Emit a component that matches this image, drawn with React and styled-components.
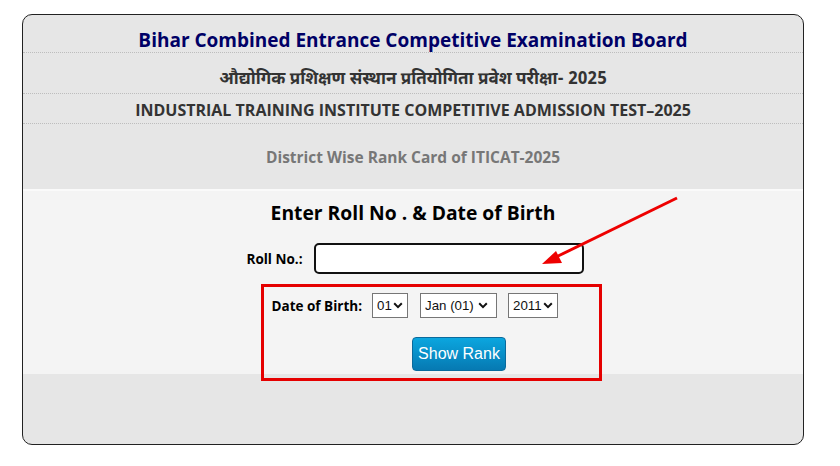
import React from "react";
import styled, { createGlobalStyle } from "styled-components";

const Global = createGlobalStyle`
  html, body { margin: 0; padding: 0; background: #fff; }
  body { font-family: "Open Sans", "Noto Sans", sans-serif; }
`;

const Page = styled.div`
  width: 840px;
  height: 466px;
  padding: 14px 0 0 22px;
  box-sizing: border-box;
  position: relative;
`;

const Card = styled.div`
  width: 782px;
  height: 431px;
  box-sizing: border-box;
  border: 1px solid #222;
  border-radius: 10px;
  background: #e6e6e6;
  overflow: hidden;
  display: flex;
  flex-direction: column;
`;

const HeadRow = styled.div`
  height: ${(p) => p.$h}px;
  flex-shrink: 0;
  box-sizing: border-box;
  display: flex;
  align-items: center;
  justify-content: center;
  border-bottom: ${(p) => (p.$line ? "1px dotted #bdbdbd" : "none")};
  font-weight: 700;
  font-size: ${(p) => p.$size}px;
  color: ${(p) => p.$color};
  padding-top: ${(p) => p.$pt || 0}px;
`;

const Hindi = styled.span`
  font-family: "Noto Sans Devanagari", "Noto Sans", "Open Sans", sans-serif;
`;

const FormArea = styled.div`
  background: #f4f4f4;
  border-top: 2px solid #fafafa;
  height: 185px;
  flex-shrink: 0;
  box-sizing: border-box;
  display: flex;
  flex-direction: column;
  align-items: center;
  padding-top: 10px;
`;

const FormTitle = styled.h2`
  margin: 0;
  font-size: 19.3px;
  font-weight: 700;
  color: #000;
  line-height: 24px;
`;

const RollRow = styled.div`
  display: flex;
  align-items: center;
  margin-top: 18px;
  margin-left: 4px;
  gap: 11px;
`;

const Label = styled.label`
  font-size: 13.5px;
  font-weight: 700;
  color: #000;
`;

const RollInput = styled.input`
  width: 270px;
  height: 31px;
  box-sizing: border-box;
  border: 2px solid #111;
  border-radius: 5px;
  background: #fff;
  outline: none;
`;

const Highlight = styled.div`
  width: 341px;
  height: 97px;
  flex-shrink: 0;
  box-sizing: border-box;
  border: 3px solid #e50000;
  margin-top: 10px;
  margin-left: 36px;
  display: flex;
  flex-direction: column;
  align-items: center;
  position: relative;
  z-index: 1;
`;

const DobRow = styled.div`
  display: flex;
  align-items: center;
  align-self: flex-start;
  margin: 6px 0 0 8px;
`;

const chevron =
  "url(\"data:image/svg+xml,%3Csvg xmlns='http://www.w3.org/2000/svg' width='10' height='7'%3E%3Cpath d='M1.2 1.3l3.8 3.8 3.8-3.8' fill='none' stroke='%23111' stroke-width='2'/%3E%3C/svg%3E\")";

const Select = styled.select`
  appearance: none;
  -webkit-appearance: none;
  width: ${(p) => p.$w}px;
  height: 25px;
  box-sizing: border-box;
  border: 1px solid #767676;
  border-radius: 0;
  background: #fff ${chevron} no-repeat right ${(p) => p.$ar}px center;
  font-family: "Liberation Sans", Arial, sans-serif;
  font-size: 13.3px;
  color: #111;
  margin-left: ${(p) => p.$ml}px;
  padding: 0 0 0 4px;
  outline: none;
`;

const Button = styled.button`
  margin-top: 19px;
  margin-left: 56px;
  width: 94px;
  height: 34px;
  border: 1px solid #0a6a9c;
  border-radius: 4px;
  background: linear-gradient(#0ba6df, #0679b2);
  color: #fff;
  font-family: "Liberation Sans", Arial, sans-serif;
  font-size: 16px;
  padding: 0;
`;

const Arrow = styled.svg`
  position: absolute;
  left: 0;
  top: 0;
  pointer-events: none;
  z-index: 2;
`;

export default function App() {
  return (
    <>
      <Global />
      <Page>
        <Card>
          <HeadRow $h={38} $line $size={19} $color="#000066" $pt={12}>
            Bihar Combined Entrance Competitive Examination Board
          </HeadRow>
          <HeadRow $h={41} $line $size={17} $color="#333" $pt={14}>
            <Hindi>औद्योगिक प्रशिक्षण संस्थान प्रतियोगिता प्रवेश परीक्षा- 2025</Hindi>
          </HeadRow>
          <HeadRow $h={30} $line $size={16} $color="#333" $pt={2}>
            INDUSTRIAL TRAINING INSTITUTE COMPETITIVE ADMISSION TEST–2025
          </HeadRow>
          <HeadRow $h={65} $size={15.5} $color="#777">
            District Wise Rank Card of ITICAT-2025
          </HeadRow>
          <FormArea>
            <FormTitle>Enter Roll No . &amp; Date of Birth</FormTitle>
            <RollRow>
              <Label>Roll No.:</Label>
              <RollInput type="text" />
            </RollRow>
            <Highlight>
              <DobRow>
                <Label>Date of Birth:</Label>
                <Select $w={36} $ml={10} $ar={4} defaultValue="01">
                  <option>01</option>
                </Select>
                <Select $w={77} $ml={12} $ar={8} defaultValue="Jan (01)">
                  <option>Jan (01)</option>
                </Select>
                <Select $w={50} $ml={11} $ar={4} defaultValue="2011">
                  <option>2011</option>
                </Select>
              </DobRow>
              <Button>Show Rank</Button>
            </Highlight>
          </FormArea>
        </Card>
        <Arrow width="840" height="466" viewBox="0 0 840 466">
          <line x1="677" y1="198" x2="556" y2="257" stroke="#e00" strokeWidth="3" />
          <polygon points="542,264 556,251 562,263" fill="#e00" />
        </Arrow>
      </Page>
    </>
  );
}
